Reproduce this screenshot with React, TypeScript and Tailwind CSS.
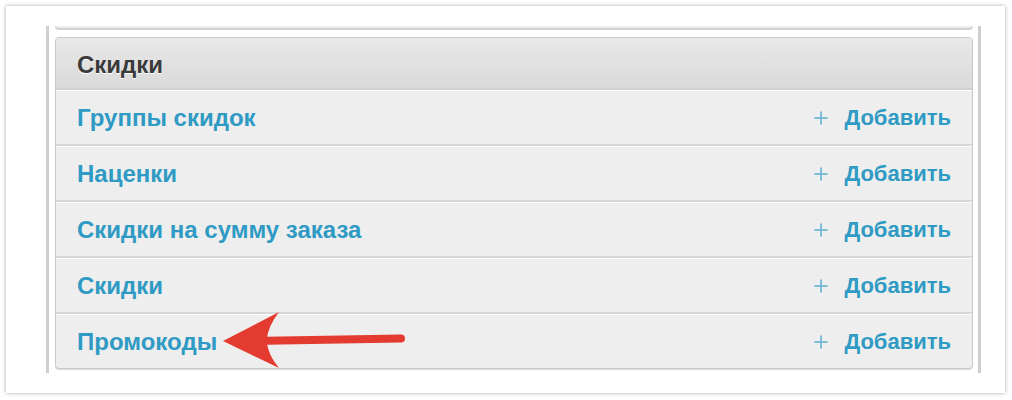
const rows = ['Группы скидок', 'Наценки', 'Скидки на сумму заказа', 'Скидки', 'Промокоды']

function PlusIcon() {
  return (
    <svg width="14" height="14" viewBox="0 0 14 14" className="shrink-0">
      <path d="M7 0.5v13M0.5 7h13" stroke="#7cbdd8" strokeWidth="2" />
    </svg>
  )
}

export default function App() {
  return (
    <div
      className="relative w-[1012px] h-[400px] bg-white overflow-hidden"
      style={{ fontFamily: '"Liberation Sans", Arial, sans-serif' }}
    >
      <div className="ml-[6px] mt-[6px] w-[999px] h-[387px] bg-white shadow-[0_0_4px_rgba(0,0,0,0.35)] pl-[40px] pt-[20px]">
        {/* outer container with side rules */}
        <div className="w-[935px] h-[347px] border-x-[3px] border-[#cfcfcf] pl-[6px] pr-[5px]">
          {/* tail of the previous panel */}
          <div className="h-[4px] border-x border-b-2 border-[#d2d2d2] rounded-b-[4px] bg-[#ececec]" />

          {/* discounts panel */}
          <div className="mt-[7px] border border-[#cacaca] rounded-[4px] bg-[#eeeeee] shadow-[0_1px_0_#dadada] overflow-hidden">
            <div className="h-[52px] flex items-center pl-[21px] pt-[3px] bg-gradient-to-b from-[#e8e8e8] to-[#dadada] border-b-2 border-[#d0d0d0]">
              <span className="text-[24px] leading-none font-bold text-[#3a3a3a] [text-shadow:0_1px_0_#ffffff]">Скидки</span>
            </div>

            {rows.map((r, i) => (
              <div
                key={r}
                className={`flex items-center justify-between pl-[21px] pr-[21px] border-t border-white ${
                  i < rows.length - 1 ? 'h-[56px] border-b-2 border-b-[#d6d6d6]' : 'h-[54px]'
                }`}
              >
                <span className="text-[24px] leading-none font-bold text-[#2f9ac4]">{r}</span>
                <span className="flex items-center gap-[16px]">
                  <PlusIcon />
                  <span className="text-[22px] leading-none font-bold text-[#2f9ac4]">Добавить</span>
                </span>
              </div>
            ))}
          </div>
        </div>
      </div>

      {/* annotation arrow */}
      <svg className="absolute left-0 top-0 pointer-events-none" width="1012" height="400" viewBox="0 0 1012 400">
        <path d="M266 340.8 L401 338.6" stroke="#e43b30" strokeWidth="8" strokeLinecap="round" fill="none" />
        <path d="M223 341 L279 312 Q268 326 266.5 340.5 Q268 355 279 368 Z" fill="#e43b30" />
      </svg>
    </div>
  )
}
